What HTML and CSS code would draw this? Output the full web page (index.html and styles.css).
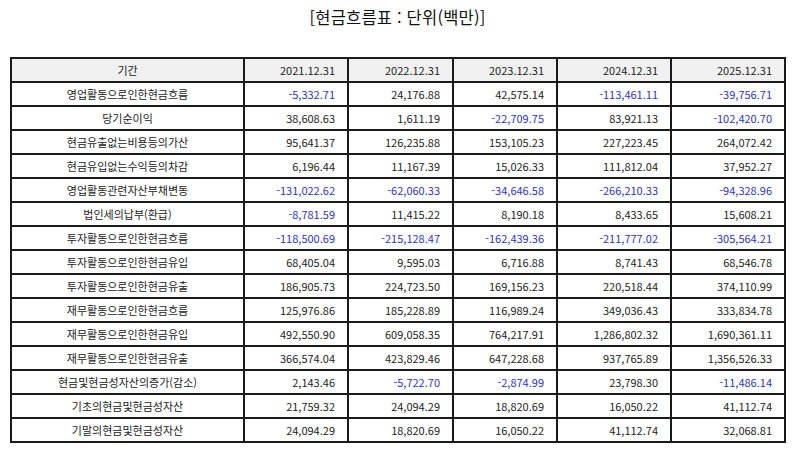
FILE: index.html
```html
<!DOCTYPE html>
<html lang="ko">
<head>
<meta charset="utf-8">
<link rel="stylesheet" href="styles.css">
</head>
<body>
<div class="page">
  <h1 class="title">[현금흐름표 : 단위(백만)]</h1>
  <table class="cf">
    <colgroup>
      <col class="c-label"><col class="c-num"><col class="c-num2"><col class="c-num"><col class="c-num3"><col class="c-num3">
    </colgroup>
    <thead>
      <tr><th>기간</th><th>2021.12.31</th><th>2022.12.31</th><th>2023.12.31</th><th>2024.12.31</th><th>2025.12.31</th></tr>
    </thead>
    <tbody>
      <tr><td>영업활동으로인한현금흐름</td><td class="neg">-5,332.71</td><td>24,176.88</td><td>42,575.14</td><td class="neg">-113,461.11</td><td class="neg">-39,756.71</td></tr>
      <tr><td>당기순이익</td><td>38,608.63</td><td>1,611.19</td><td class="neg">-22,709.75</td><td>83,921.13</td><td class="neg">-102,420.70</td></tr>
      <tr><td>현금유출없는비용등의가산</td><td>95,641.37</td><td>126,235.88</td><td>153,105.23</td><td>227,223.45</td><td>264,072.42</td></tr>
      <tr><td>현금유입없는수익등의차감</td><td>6,196.44</td><td>11,167.39</td><td>15,026.33</td><td>111,812.04</td><td>37,952.27</td></tr>
      <tr><td>영업활동관련자산부채변동</td><td class="neg">-131,022.62</td><td class="neg">-62,060.33</td><td class="neg">-34,646.58</td><td class="neg">-266,210.33</td><td class="neg">-94,328.96</td></tr>
      <tr><td>법인세의납부(환급)</td><td class="neg">-8,781.59</td><td>11,415.22</td><td>8,190.18</td><td>8,433.65</td><td>15,608.21</td></tr>
      <tr><td>투자활동으로인한현금흐름</td><td class="neg">-118,500.69</td><td class="neg">-215,128.47</td><td class="neg">-162,439.36</td><td class="neg">-211,777.02</td><td class="neg">-305,564.21</td></tr>
      <tr><td>투자활동으로인한현금유입</td><td>68,405.04</td><td>9,595.03</td><td>6,716.88</td><td>8,741.43</td><td>68,546.78</td></tr>
      <tr><td>투자활동으로인한현금유출</td><td>186,905.73</td><td>224,723.50</td><td>169,156.23</td><td>220,518.44</td><td>374,110.99</td></tr>
      <tr><td>재무활동으로인한현금흐름</td><td>125,976.86</td><td>185,228.89</td><td>116,989.24</td><td>349,036.43</td><td>333,834.78</td></tr>
      <tr><td>재무활동으로인한현금유입</td><td>492,550.90</td><td>609,058.35</td><td>764,217.91</td><td>1,286,802.32</td><td>1,690,361.11</td></tr>
      <tr><td>재무활동으로인한현금유출</td><td>366,574.04</td><td>423,829.46</td><td>647,228.68</td><td>937,765.89</td><td>1,356,526.33</td></tr>
      <tr><td>현금및현금성자산의증가(감소)</td><td>2,143.46</td><td class="neg">-5,722.70</td><td class="neg">-2,874.99</td><td>23,798.30</td><td class="neg">-11,486.14</td></tr>
      <tr><td>기초의현금및현금성자산</td><td>21,759.32</td><td>24,094.29</td><td>18,820.69</td><td>16,050.22</td><td>41,112.74</td></tr>
      <tr><td>기말의현금및현금성자산</td><td>24,094.29</td><td>18,820.69</td><td>16,050.22</td><td>41,112.74</td><td>32,068.81</td></tr>
    </tbody>
  </table>
</div>
</body>
</html>
```

FILE: styles.css
```css
html, body {
  margin: 0;
  padding: 0;
  background: #ffffff;
}
.page {
  padding: 5px 9px 0 10px;
  font-family: "Noto Sans CJK KR", "Noto Sans", sans-serif;
  color: #222222;
}
.title {
  margin: 0;
  height: 52px;
  text-align: center;
  font-size: 16.5px;
  font-weight: 400;
  line-height: 24px;
  color: #111111;
  letter-spacing: 0.2px;
}
.cf {
  border-collapse: collapse;
  table-layout: fixed;
  width: 775px;
  font-size: 11px;
}
.c-label { width: 233px; }
.c-num { width: 104px; }
.c-num2 { width: 105px; }
.c-num3 { width: 114px; }
.cf th,
.cf td {
  border: 2px solid #1a1a1a;
  height: 22px;
  padding: 0 12px 0 6px;
  text-align: right;
  font-weight: 400;
  line-height: 14px;
  white-space: nowrap;
  color: #222222;
}
.cf th {
  background: #f0f0f0;
}
.cf th:first-child,
.cf td:first-child {
  text-align: center;
  padding: 0 6px;
}
.cf td.neg {
  color: #2f2fd0;
}
```
